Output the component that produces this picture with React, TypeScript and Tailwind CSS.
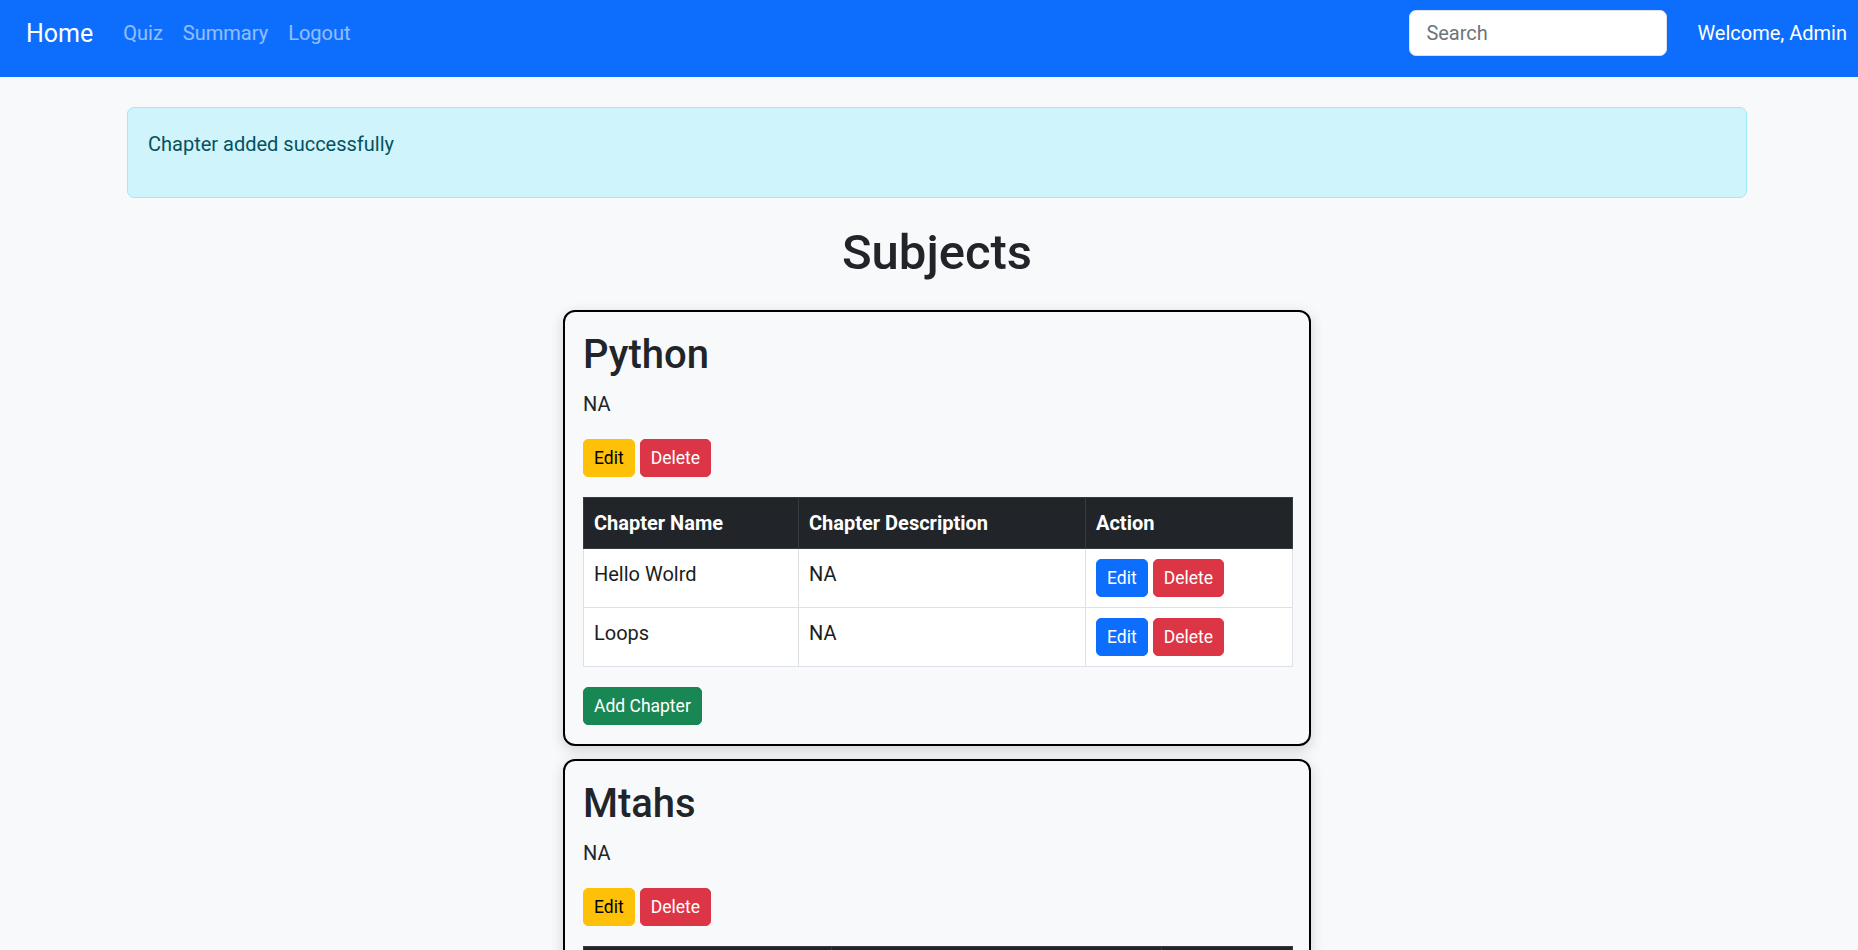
import React from "react";

type Chapter = { name: string; description: string };

type Subject = {
  name: string;
  description: string;
  chapters: Chapter[];
  cols: [number, number, number];
};

const subjects: Subject[] = [
  {
    name: "Python",
    description: "NA",
    chapters: [
      { name: "Hello Wolrd", description: "NA" },
      { name: "Loops", description: "NA" },
    ],
    cols: [215, 287, 207],
  },
  {
    name: "Mtahs",
    description: "NA",
    chapters: [
      { name: "Algebra Basics", description: "Introduction to equations" },
      { name: "Geometry", description: "NA" },
    ],
    cols: [248, 330, 131],
  },
];

const btn = "inline-block rounded-[5px] border px-[10px] py-[5px] text-[17.5px] leading-[26px]";

function SmallButton({ kind, children }: { kind: "warning" | "danger" | "primary" | "success"; children: React.ReactNode }) {
  const colors = {
    warning: "border-[#ffc107] bg-[#ffc107] text-black",
    danger: "border-[#dc3545] bg-[#dc3545] text-white",
    primary: "border-[#0d6efd] bg-[#0d6efd] text-white",
    success: "border-[#198754] bg-[#198754] text-white",
  }[kind];
  return <button className={`${btn} ${colors}`}>{children}</button>;
}

function Navbar() {
  return (
    <nav className="flex items-center justify-between bg-[#0d6efd] pb-[21px] pl-[26px] pr-[11px] pt-[10px]">
      <div className="flex items-center">
        <a className="mr-[20px] text-[25px] leading-[37px] text-white">Home</a>
        {["Quiz", "Summary", "Logout"].map((link) => (
          <a key={link} className="px-[10px] text-[20px] leading-[30px] text-white/55">
            {link}
          </a>
        ))}
      </div>
      <div className="flex items-center gap-[30px]">
        <input
          placeholder="Search"
          className="h-[46px] w-[258px] rounded-[7px] border border-[#dee2e6] bg-white px-[16px] text-[20px] text-[#212529] outline-none placeholder:text-[#6c757d]"
        />
        <span className="text-[20px] leading-[30px] text-white">Welcome, Admin</span>
      </div>
    </nav>
  );
}

function SubjectCard({ subject }: { subject: Subject }) {
  return (
    <div className="mx-auto mb-[13px] w-[748px] rounded-[12px] border-2 border-black bg-[#f8f9fa] py-[19px] pl-[18px] pr-[19px] shadow-[0_4px_14px_rgba(0,0,0,0.16)]">
      <h2 className="mb-[10px] text-[40px] font-medium leading-[48px] text-[#212529]">{subject.name}</h2>
      <p className="mb-[20px] text-[20px] leading-[30px] text-[#212529]">{subject.description}</p>
      <div className="mb-[20px] flex gap-[5px]">
        <SmallButton kind="warning">Edit</SmallButton>
        <SmallButton kind="danger">Delete</SmallButton>
      </div>
      <table className="mb-[20px] w-full table-fixed border-collapse text-[20px] leading-[30px]">
        <colgroup>
          {subject.cols.map((w, i) => (
            <col key={i} style={{ width: w }} />
          ))}
        </colgroup>
        <thead>
          <tr className="bg-[#212529] text-white">
            {["Chapter Name", "Chapter Description", "Action"].map((h) => (
              <th key={h} className="border border-[#373b3e] p-[10px] text-left font-bold">
                {h}
              </th>
            ))}
          </tr>
        </thead>
        <tbody className="bg-white text-[#1a1d20]">
          {subject.chapters.map((c) => (
            <tr key={c.name}>
              <td className="border border-[#dee2e6] p-[10px] align-top">{c.name}</td>
              <td className="border border-[#dee2e6] p-[10px] align-top">{c.description}</td>
              <td className="border border-[#dee2e6] p-[10px] align-top">
                <div className="flex gap-[5px]">
                  <SmallButton kind="primary">Edit</SmallButton>
                  <SmallButton kind="danger">Delete</SmallButton>
                </div>
              </td>
            </tr>
          ))}
        </tbody>
      </table>
      <SmallButton kind="success">Add Chapter</SmallButton>
    </div>
  );
}

export default function App() {
  return (
    <div className="min-h-screen bg-[#f8f9fa] font-['Roboto',sans-serif] text-[#212529]">
      <Navbar />
      <main className="pl-[16px] pt-[30px]">
        <div className="mx-auto w-[1620px]">
          <div className="mb-[25px] rounded-[7px] border border-[#9eeaf9] bg-[#cff4fc] px-[20px] pb-[38px] pt-[21px] text-[20px] leading-[30px] text-[#055160]">
            Chapter added successfully
          </div>
          <h1 className="mb-[27px] text-center text-[49px] font-medium leading-[60px] text-[#212529]">Subjects</h1>
          {subjects.map((s) => (
            <SubjectCard key={s.name} subject={s} />
          ))}
        </div>
      </main>
    </div>
  );
}
